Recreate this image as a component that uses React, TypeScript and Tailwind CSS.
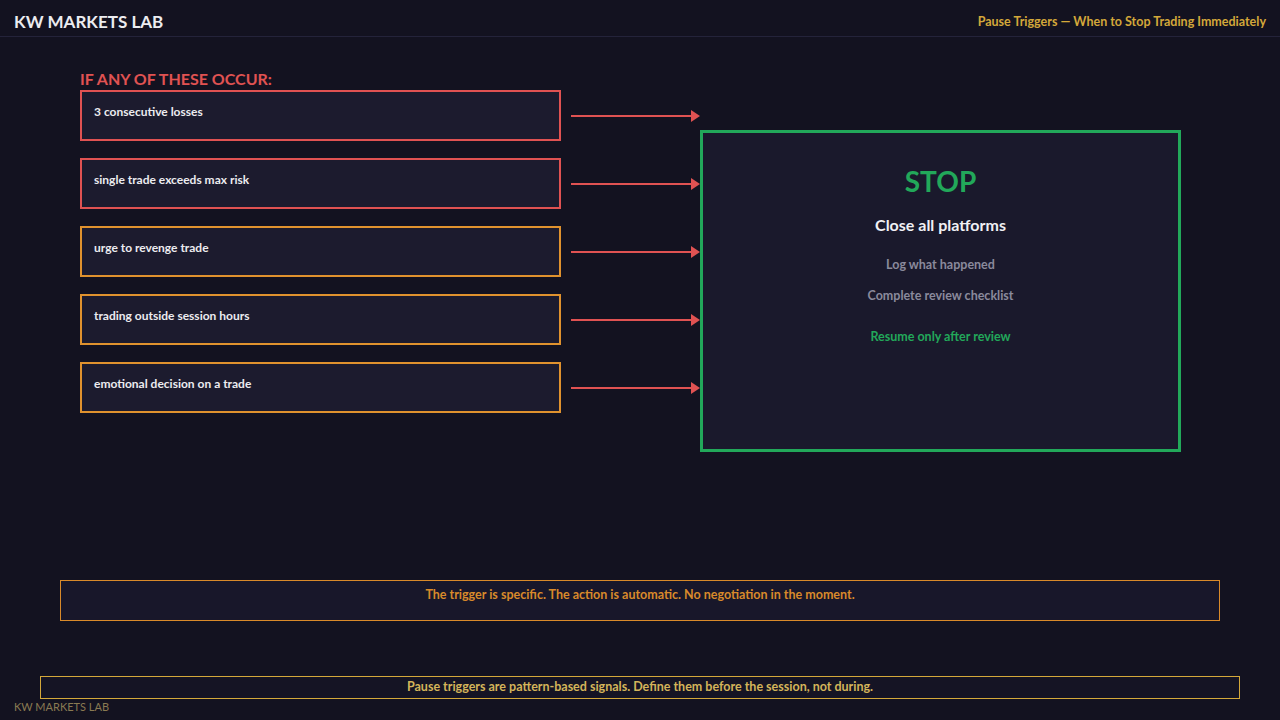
const triggers = [
  { text: '3 consecutive losses', color: 'border-[#e05252]' },
  { text: 'single trade exceeds max risk', color: 'border-[#e05252]' },
  { text: 'urge to revenge trade', color: 'border-[#e0922e]' },
  { text: 'trading outside session hours', color: 'border-[#e0922e]' },
  { text: 'emotional decision on a trade', color: 'border-[#e0922e]' },
]

function Arrow() {
  return (
    <svg width="131" height="14" viewBox="0 0 131 14" className="shrink-0">
      <line x1="1" y1="7" x2="123" y2="7" stroke="#e05252" strokeWidth="2" />
      <polygon points="121,1 130,7 121,13" fill="#e05252" />
    </svg>
  )
}

export default function App() {
  return (
    <div className="w-[1280px] h-[720px] bg-[#131220] text-white relative overflow-hidden" style={{ fontFamily: 'Lato, "Open Sans", sans-serif' }}>
      {/* header */}
      <div className="h-[37px] border-b border-[#24233a] flex items-center justify-between px-[14px] pt-[8px]">
        <div className="text-[17px] font-bold text-[#ececf0]">KW MARKETS LAB</div>
        <div className="text-[12.5px] font-bold text-[#d4a83a]">Pause Triggers — When to Stop Trading Immediately</div>
      </div>

      <div className="flex pl-[80px] pt-[32px]">
        <div className="w-[620px] shrink-0">
          <div className="text-[16px] font-bold text-[#e05252] leading-[20px] mb-[1px]">IF ANY OF THESE OCCUR:</div>
          <div className="flex flex-col gap-[17px]">
            {triggers.map(t => (
              <div key={t.text} className="flex items-center gap-[9px]">
                <div className={`w-[481px] shrink-0 h-[51px] border-2 ${t.color} bg-[#1c1b2e] px-[12px] pt-[11px] text-[12px] font-bold text-[#ececf0]`}>
                  {t.text}
                </div>
                <Arrow />
              </div>
            ))}
          </div>
        </div>
        <div className="mt-[61px] w-[481px] h-[322px] border-[3px] border-[#22a85a] bg-[#1a192c] flex flex-col items-center pt-[30px]">
          <div className="text-[28px] font-bold text-[#22a85a] leading-[36px]">STOP</div>
          <div className="mt-[14px] text-[16px] font-bold text-[#f0f0f4]">Close all platforms</div>
          <div className="mt-[19px] text-[12.5px] font-bold text-[#8a8a9c]">Log what happened</div>
          <div className="mt-[12px] text-[12.5px] font-bold text-[#8a8a9c]">Complete review checklist</div>
          <div className="mt-[22px] text-[12.5px] font-bold text-[#22a85a]">Resume only after review</div>
        </div>
      </div>

      <div className="mx-[60px] mt-[128px] h-[41px] border border-[#d98a2a] bg-[#18172a] text-center pt-[5px] text-[12.5px] font-bold text-[#d98a2a]">
        The trigger is specific. The action is automatic. No negotiation in the moment.
      </div>

      <div className="mx-[40px] mt-[55px] h-[23px] border border-[#d4a83a] bg-[#151424] text-center pt-[1px] text-[12.5px] font-bold text-[#d4b45a]">
        Pause triggers are pattern-based signals. Define them before the session, not during.
      </div>
      <div className="px-[14px] text-[11px] text-[#8a7a52]">KW MARKETS LAB</div>
    </div>
  )
}
